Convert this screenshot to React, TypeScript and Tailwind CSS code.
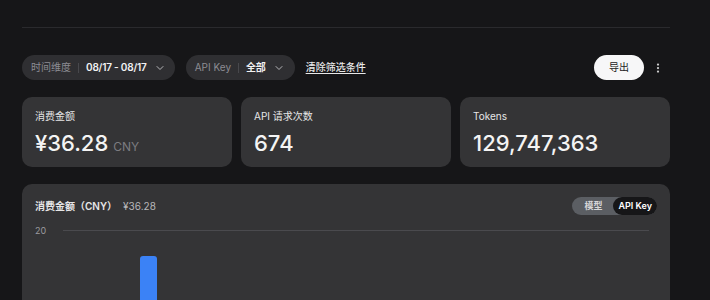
import { ChevronDown, EllipsisVertical } from "lucide-react";

const font = { fontFamily: 'Inter, "Noto Sans CJK SC", sans-serif' };

function FilterPill({ label, value }: { label: string; value: string }) {
  return (
    <div className="h-[25px] flex items-center rounded-full bg-[#2f2f32] pl-[9px] pr-[9px] text-[10px]">
      <span className="text-[#8c8c92]">{label}</span>
      <span className="mx-[7px] h-[10px] w-px bg-[#48484c]" />
      <span className="font-semibold tracking-[-0.2px] text-[#f2f2f2]">{value}</span>
      <ChevronDown className="ml-[7px] text-[#b5b5b8]" size={12} strokeWidth={2} />
    </div>
  );
}

function StatCard({ label, value, unit }: { label: string; value: string; unit?: string }) {
  return (
    <div className="flex-1 h-[70px] rounded-[10px] bg-[#343436] px-[13px] pt-[12px]">
      <div className="text-[10px] leading-[14px] text-[#e6e6e6]">{label}</div>
      <div className="mt-[6px] flex items-baseline gap-[5px]">
        <span className="text-[22px] leading-[28px] font-medium text-[#f4f4f4]">{value}</span>
        {unit && <span className="text-[12px] text-[#7c7c80]">{unit}</span>}
      </div>
    </div>
  );
}

export default function App() {
  return (
    <div className="w-[710px] h-[300px] overflow-hidden bg-[#161618] pl-[22px] pr-[40px]" style={font}>
      <div className="h-[28px] border-b border-[#2a2a2d]" />

      <div className="mt-[27px] flex items-center">
        <FilterPill label="时间维度" value="08/17 - 08/17" />
        <div className="ml-[11px] [&>div]:pr-[10px]">
          <FilterPill label="API Key" value="全部" />
        </div>
        <span className="ml-[11px] text-[10px] font-medium text-[#e8e8e8] underline underline-offset-2">清除筛选条件</span>
        <div className="ml-auto flex items-center">
          <button className="h-[25px] w-[50px] rounded-full bg-[#f7f7f8] text-[10px] text-[#222]">导出</button>
          <EllipsisVertical className="ml-[8px] mr-[6px] text-[#d0d0d0]" size={12} strokeWidth={2.5} />
        </div>
      </div>

      <div className="mt-[17px] flex gap-[9px]">
        <StatCard label="消费金额" value="¥36.28" unit="CNY" />
        <StatCard label="API 请求次数" value="674" />
        <StatCard label="Tokens" value="129,747,363" />
      </div>

      <div className="mt-[17px] h-[140px] rounded-[10px] bg-[#343436] px-[13px] pt-[13px]">
        <div className="flex items-center justify-between">
          <div className="flex items-center gap-[6px] text-[10px]">
            <span className="font-semibold text-[#e6e6e6]">消费金额（CNY）</span>
            <span className="text-[#b8b8bb]">¥36.28</span>
          </div>
          <div className="flex h-[18px] items-center rounded-full bg-[#5b5e63] text-[9px] font-semibold">
            <span className="pl-[12px] pr-[11px] text-[#d6d6d8]">模型</span>
            <span className="h-full flex items-center rounded-full bg-[#161618] px-[5px] text-white">API Key</span>
          </div>
        </div>
        <div className="mt-[9px] flex items-center">
          <span className="w-[28px] text-[9px] text-[#9a9a9e]">20</span>
          <div className="flex-1 mr-[8px] h-px bg-[#4a4a4e]" />
        </div>
        <div className="ml-[105px] mt-[18px] h-[60px] w-[17px] rounded-t-[3px] bg-[#3b82f6]" />
      </div>
    </div>
  );
}
